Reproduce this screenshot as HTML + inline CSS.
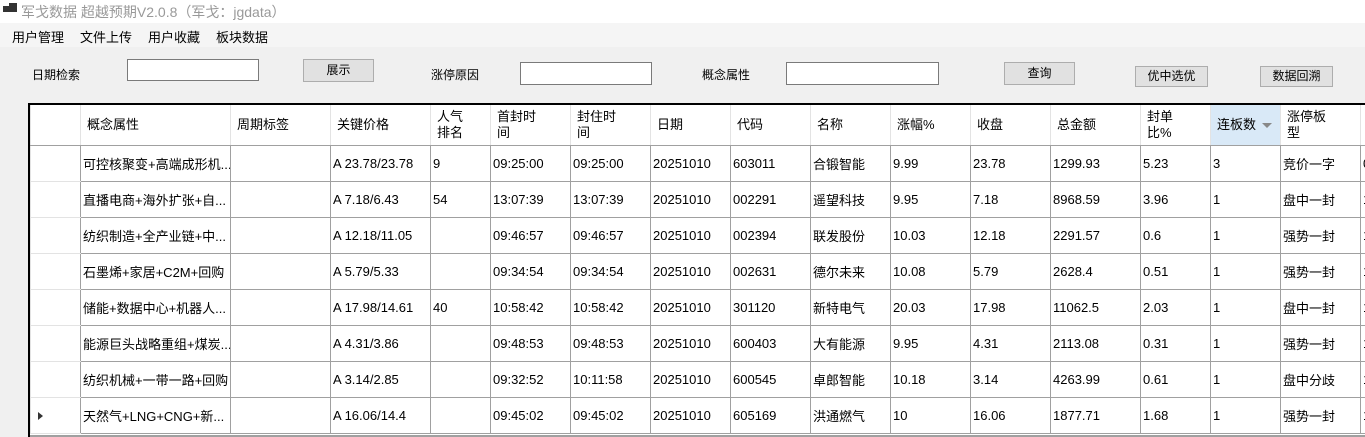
<!DOCTYPE html><html><head><meta charset="utf-8"><style>
body{margin:0;width:1365px;height:437px;overflow:hidden;background:#f0f0f0;font-family:"Liberation Sans","Noto Sans CJK SC",sans-serif;font-size:12px;color:#000;position:relative}
.a{position:absolute}
.title{left:0;top:0;width:1365px;height:23px;background:#fff;color:#999;font-size:14px}
.menu{left:0;top:23px;width:1365px;height:24px;background:#f5f5f5}
.menu span{position:absolute;top:4px;font-size:13px}
.tb{background:#fff;border:1px solid #7a7a7a;box-sizing:border-box}
.btn{background:#e1e1e1;border:1px solid #adadad;box-sizing:border-box;text-align:center;font-size:12px}
.grid{left:28px;top:103px;width:1337px;height:334px;background:#fff;border-left:2px solid #000;border-top:2px solid #000;box-sizing:border-box;overflow:hidden}
table{border-collapse:collapse;table-layout:fixed;position:absolute;left:0;top:0;width:1410px}
td{height:36px;border:1px solid #a0a0a0;padding:0 0 0 2px;white-space:nowrap;overflow:hidden;font-size:13px;box-sizing:border-box}
tr.h td{height:40px;border-top:none;border-color:#e3e3e3;border-bottom:1px solid #a0a0a0;padding-left:6px;line-height:16px;white-space:normal}
td.rh{border-color:#e3e3e3;border-right:1px solid #a0a0a0}
</style></head><body>
<div class="a title"><div class="a" style="left:3px;top:6px;width:6px;height:6px;background:#333"></div><div class="a" style="left:9px;top:3px;width:8px;height:9px;background:#333"></div><span class="a" style="left:21px;top:2px">军戈数据 超越预期V2.0.8（军戈：jgdata）</span></div>
<div class="a menu"><span style="left:12px">用户管理</span><span style="left:80px">文件上传</span><span style="left:148px">用户收藏</span><span style="left:216px">板块数据</span></div>
<span class="a" style="left:32px;top:66px">日期检索</span>
<div class="a tb" style="left:127px;top:59px;width:132px;height:22px"></div>
<div class="a btn" style="left:303px;top:59px;width:71px;height:23px;line-height:21px">展示</div>
<span class="a" style="left:431px;top:66px">涨停原因</span>
<div class="a tb" style="left:520px;top:62px;width:132px;height:23px"></div>
<span class="a" style="left:702px;top:66px">概念属性</span>
<div class="a tb" style="left:786px;top:62px;width:153px;height:23px"></div>
<div class="a btn" style="left:1004px;top:62px;width:71px;height:23px;line-height:21px">查询</div>
<div class="a btn" style="left:1135px;top:66px;width:73px;height:21px;line-height:19px">优中选优</div>
<div class="a btn" style="left:1260px;top:66px;width:73px;height:21px;line-height:19px">数据回溯</div>
<div class="a grid">
<table>
<colgroup><col style="width:50px"><col style="width:150px"><col style="width:100px"><col style="width:100px"><col style="width:60px"><col style="width:80px"><col style="width:80px"><col style="width:80px"><col style="width:80px"><col style="width:80px"><col style="width:80px"><col style="width:80px"><col style="width:90px"><col style="width:70px"><col style="width:70px"><col style="width:80px"><col style="width:80px"></colgroup>
<tr class="h"><td></td><td>概念属性</td><td>周期标签</td><td>关键价格</td><td>人气<br>排名</td><td>首封时<br>间</td><td>封住时<br>间</td><td>日期</td><td>代码</td><td>名称</td><td>涨幅%</td><td>收盘</td><td>总金额</td><td>封单<br>比%</td><td style="background:#d9e9f7;position:relative">连板数<span style="position:absolute;right:8px;top:18px;width:0;height:0;border-left:5px solid transparent;border-right:5px solid transparent;border-top:5px solid #888"></span></td><td>涨停板<br>型</td><td></td></tr>
<tr><td class="rh"></td><td>可控核聚变+高端成形机...</td><td></td><td>A 23.78/23.78</td><td>9</td><td>09:25:00</td><td>09:25:00</td><td>20251010</td><td>603011</td><td>合锻智能</td><td>9.99</td><td>23.78</td><td>1299.93</td><td>5.23</td><td>3</td><td>竞价一字</td><td>0</td></tr>
<tr><td class="rh"></td><td>直播电商+海外扩张+自...</td><td></td><td>A 7.18/6.43</td><td>54</td><td>13:07:39</td><td>13:07:39</td><td>20251010</td><td>002291</td><td>遥望科技</td><td>9.95</td><td>7.18</td><td>8968.59</td><td>3.96</td><td>1</td><td>盘中一封</td><td>1</td></tr>
<tr><td class="rh"></td><td>纺织制造+全产业链+中...</td><td></td><td>A 12.18/11.05</td><td></td><td>09:46:57</td><td>09:46:57</td><td>20251010</td><td>002394</td><td>联发股份</td><td>10.03</td><td>12.18</td><td>2291.57</td><td>0.6</td><td>1</td><td>强势一封</td><td>1</td></tr>
<tr><td class="rh"></td><td>石墨烯+家居+C2M+回购</td><td></td><td>A 5.79/5.33</td><td></td><td>09:34:54</td><td>09:34:54</td><td>20251010</td><td>002631</td><td>德尔未来</td><td>10.08</td><td>5.79</td><td>2628.4</td><td>0.51</td><td>1</td><td>强势一封</td><td>1</td></tr>
<tr><td class="rh"></td><td>储能+数据中心+机器人...</td><td></td><td>A 17.98/14.61</td><td>40</td><td>10:58:42</td><td>10:58:42</td><td>20251010</td><td>301120</td><td>新特电气</td><td>20.03</td><td>17.98</td><td>11062.5</td><td>2.03</td><td>1</td><td>盘中一封</td><td>1</td></tr>
<tr><td class="rh"></td><td>能源巨头战略重组+煤炭...</td><td></td><td>A 4.31/3.86</td><td></td><td>09:48:53</td><td>09:48:53</td><td>20251010</td><td>600403</td><td>大有能源</td><td>9.95</td><td>4.31</td><td>2113.08</td><td>0.31</td><td>1</td><td>强势一封</td><td>1</td></tr>
<tr><td class="rh"></td><td>纺织机械+一带一路+回购</td><td></td><td>A 3.14/2.85</td><td></td><td>09:32:52</td><td>10:11:58</td><td>20251010</td><td>600545</td><td>卓郎智能</td><td>10.18</td><td>3.14</td><td>4263.99</td><td>0.61</td><td>1</td><td>盘中分歧</td><td>1</td></tr>
<tr><td class="rh" style="position:relative"><span style="position:absolute;left:7px;top:14px;width:0;height:0;border-top:4px solid transparent;border-bottom:4px solid transparent;border-left:5px solid #333"></span></td><td>天然气+LNG+CNG+新...</td><td></td><td>A 16.06/14.4</td><td></td><td>09:45:02</td><td>09:45:02</td><td>20251010</td><td>605169</td><td>洪通燃气</td><td>10</td><td>16.06</td><td>1877.71</td><td>1.68</td><td>1</td><td>强势一封</td><td>1</td></tr>
</table>
<div class="a" style="left:0;top:330px;width:1337px;height:4px;background:#a0a0a0"></div>
</div>
</body></html>
